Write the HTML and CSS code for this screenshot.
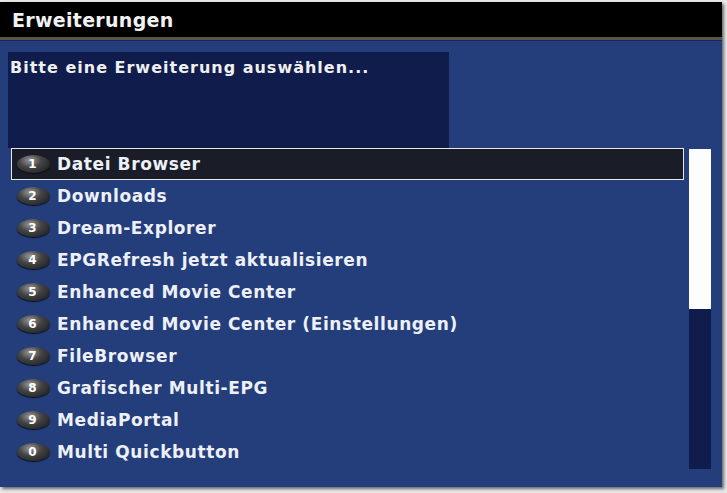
FILE: index.html
```html
<!DOCTYPE html>
<html>
<head>
<meta charset="utf-8">
<link rel="stylesheet" href="styles.css">
</head>
<body>
<div class="screen">
  <div class="window">
    <div class="titlebar">Erweiterungen</div>
    <div class="content">
      <div class="desc">Bitte eine Erweiterung auswählen...</div>
      <div class="listarea">
        <ul class="list">
          <li class="item selected"><span class="badge">1</span><span class="label">Datei Browser</span></li>
          <li class="item"><span class="badge">2</span><span class="label">Downloads</span></li>
          <li class="item"><span class="badge">3</span><span class="label">Dream-Explorer</span></li>
          <li class="item"><span class="badge">4</span><span class="label">EPGRefresh jetzt aktualisieren</span></li>
          <li class="item"><span class="badge">5</span><span class="label">Enhanced Movie Center</span></li>
          <li class="item"><span class="badge">6</span><span class="label">Enhanced Movie Center (Einstellungen)</span></li>
          <li class="item"><span class="badge">7</span><span class="label">FileBrowser</span></li>
          <li class="item"><span class="badge">8</span><span class="label">Grafischer Multi-EPG</span></li>
          <li class="item"><span class="badge">9</span><span class="label">MediaPortal</span></li>
          <li class="item"><span class="badge">0</span><span class="label">Multi Quickbutton</span></li>
        </ul>
        <div class="scrollbar"><div class="thumb"></div></div>
      </div>
    </div>
  </div>
</div>
</body>
</html>
```
FILE: styles.css
```css
html, body {
  margin: 0;
  padding: 0;
  background: #e6e6e6;
}
.screen {
  width: 727px;
  height: 493px;
  background: #e8e8e8;
  overflow: hidden;
  font-family: "DejaVu Sans", sans-serif;
  font-weight: bold;
}
.window {
  margin-top: 2px;
  width: 722px;
  height: 485px;
  display: flex;
  flex-direction: column;
  box-shadow: 2px 2px 3px #6a6a6a;
  background: #233e7b;
}
.titlebar {
  height: 35px;
  background: #000;
  color: #f2f2f2;
  font-size: 19px;
  line-height: 36px;
  padding-left: 12px;
  border-bottom: 3px solid #56574a;
  letter-spacing: 0.3px;
}
.content {
  flex: 1;
  display: flex;
  flex-direction: column;
  border-top: 1px solid #152860;
  padding: 11px 0 0 8px;
}
.desc {
  width: 441px;
  height: 96px;
  background: #101c4c;
  color: #f0f0f0;
  font-size: 16px;
  letter-spacing: 1px;
  line-height: 18px;
  padding: 7px 0 0 2px;
  box-sizing: border-box;
}
.listarea {
  display: flex;
  gap: 5px;
}
.list {
  list-style: none;
  margin: 0 0 0 3px;
  padding: 0;
  width: 673px;
}
.item {
  height: 32px;
  display: flex;
  align-items: center;
  color: #eef0f8;
  font-size: 17px;
  letter-spacing: 0.6px;
  box-sizing: border-box;
  padding-left: 6px;
  padding-bottom: 1px;
}
.item.selected {
  background: #1a1d28;
  border: 1px solid #e8e8e8;
  padding-left: 5px;
}
.badge {
  width: 33px;
  height: 18px;
  border-radius: 50%;
  background: radial-gradient(ellipse at 40% 30%, #9a9a9a 0%, #444 40%, #151515 100%);
  color: #fff;
  font-size: 12px;
  letter-spacing: 0;
  display: flex;
  align-items: center;
  justify-content: center;
  padding-right: 2px;
  box-sizing: border-box;
  margin-right: 7px;
  flex-shrink: 0;
  box-shadow: 0 1px 1px #0a0a0a;
}
.scrollbar {
  width: 22px;
  height: 320px;
  margin-top: 1px;
  background: #101c4c;
}
.thumb {
  height: 160px;
  background: #fdfdfd;
}
```
